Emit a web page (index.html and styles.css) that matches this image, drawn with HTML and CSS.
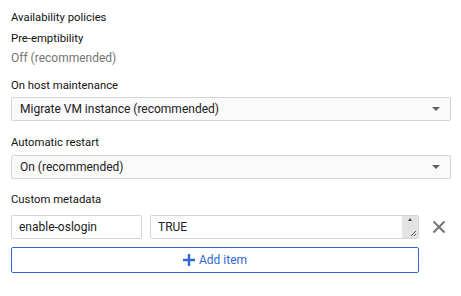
FILE: index.html
```html
<!DOCTYPE html>
<html>
<head>
<meta charset="utf-8">
<link rel="stylesheet" href="styles.css">
</head>
<body>
<div class="panel">
  <div class="title">Availability policies</div>
  <div class="label tight">Pre-emptibility</div>
  <div class="value">Off <span>(recommended)</span></div>

  <div class="label field-label">On host maintenance</div>
  <div class="select">
    <span>Migrate VM instance (recommended)</span>
    <span class="caret"></span>
  </div>

  <div class="label field-label">Automatic restart</div>
  <div class="select">
    <span>On (recommended)</span>
    <span class="caret"></span>
  </div>

  <div class="label field-label meta-label">Custom metadata</div>
  <div class="meta-row">
    <div class="input key">enable-oslogin</div>
    <div class="input val">TRUE
      <div class="grip">
        <span class="grip-up"></span>
        <svg class="grip-lines" width="8" height="8" viewBox="0 0 8 8"><path d="M7 2 L2 7 M7 5 L5 7" stroke="#555" stroke-width="1"/></svg>
      </div>
    </div>
    <svg class="close" width="14" height="14" viewBox="0 0 14 14"><path d="M1.5 1.5 L12.5 12.5 M12.5 1.5 L1.5 12.5" stroke="#757575" stroke-width="2"/></svg>
  </div>
  <div class="add-btn">
    <svg width="12" height="12" viewBox="0 0 12 12"><path d="M6 0 V12 M0 6 H12" stroke="#3367d6" stroke-width="2.4"/></svg>
    <span>Add item</span>
  </div>
</div>
</body>
</html>
```
FILE: styles.css
```css
html, body {
  margin: 0;
  padding: 0;
  background: #fff;
}
.panel {
  padding: 10px 10px 0 11px;
  width: 440px;
  font-family: Roboto, "Noto Sans", sans-serif;
  color: #212121;
  font-size: 11.3px;
  line-height: 16px;
}
.title {
  margin-bottom: 5px;
  color: #111;
}
.label {
  font-size: 11.3px;
  color: #111;
}
.value {
  margin-top: 3px;
  color: #757575;
  font-size: 12px;
}
.value span {
  color: #757575;
}
.field-label {
  margin-top: 12px;
  margin-bottom: 3px;
}
.select {
  height: 22px;
  border: 1px solid #d5d5d5;
  border-radius: 2px;
  background: #fafafa;
  display: flex;
  align-items: center;
  justify-content: space-between;
  padding: 0 10px 0 8px;
  font-size: 12px;
  color: #212121;
}
.select + .field-label {
  margin-top: 14px;
  margin-bottom: 4px;
}
.caret {
  width: 0;
  height: 0;
  border-left: 4px solid transparent;
  border-right: 4px solid transparent;
  border-top: 4px solid #616161;
}
.select + .meta-label {
  margin-top: 13px;
  margin-bottom: 7px;
}
.meta-row {
  display: flex;
  align-items: center;
  width: 436px;
}
.input {
  height: 22px;
  border: 1px solid #d5d5d5;
  border-radius: 2px;
  padding: 0 7px;
  font-size: 12px;
  line-height: 22px;
  color: #212121;
  position: relative;
}
.key {
  width: 115px;
}
.val {
  width: 253px;
  margin-left: 8px;
}
.grip {
  position: absolute;
  right: 0;
  top: 0;
  width: 16px;
  height: 22px;
  background: #e3e3e3;
}
.grip-up {
  position: absolute;
  left: 6px;
  top: 2px;
  width: 0;
  height: 0;
  border-left: 2px solid transparent;
  border-right: 2px solid transparent;
  border-bottom: 3px solid #444;
}
.grip-lines {
  position: absolute;
  right: 1px;
  bottom: 1px;
}
.close {
  margin-left: 13px;
}
.add-btn {
  margin-top: 8px;
  width: 406px;
  height: 24px;
  border: 1px solid #3367d6;
  border-radius: 2px;
  display: flex;
  align-items: center;
  justify-content: center;
  gap: 4px;
  color: #3367d6;
  font-size: 12px;
}
```
